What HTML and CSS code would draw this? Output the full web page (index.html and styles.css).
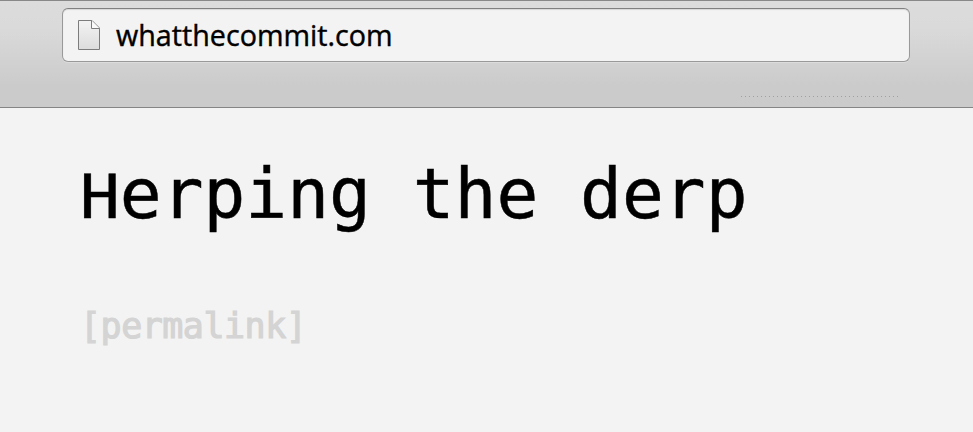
FILE: index.html
```html
<!DOCTYPE html>
<html lang="en">
<head>
<meta charset="utf-8">
<title>whatthecommit.com</title>
<link rel="stylesheet" href="styles.css">
</head>
<body>
<header class="toolbar">
  <div class="address">
    <svg class="page-icon" width="24" height="32" viewBox="0 0 24 32">
      <defs>
        <linearGradient id="paper" x2="0" y2="1">
          <stop offset="0" stop-color="#f3f3f3"/>
          <stop offset="1" stop-color="#dcdcdc"/>
        </linearGradient>
      </defs>
      <path d="M.5 1.5H14L21.5 9V30.5H.5Z" fill="url(#paper)" stroke="#7c7c7c"/>
      <path d="M13.5 1.5V9.5H21.5" fill="#fafafa" stroke="#7c7c7c"/>
    </svg>
    <span class="url">whatthecommit.com</span>
  </div>
  <div class="dots"></div>
</header>
<main class="content">
  <p class="message"><span class="cap">H</span>erping the derp</p>
  <a class="permalink">[permalink]</a>
</main>
</body>
</html>
```
FILE: styles.css
```css
* { box-sizing: border-box; }
body { margin: 0; height: 432px; overflow: hidden; background: #f3f3f3; }
.toolbar {
  height: 108px;
  padding: 7px 63px 0 62px;
  border-top: 1px solid #888;
  border-bottom: 1px solid #858585;
  background: linear-gradient(#dcdcdc, #dadada 25%, #cbcbcb 80%);
}
.address {
  display: flex;
  align-items: center;
  height: 54px;
  padding: 0 0 1px 15px;
  border: 1px solid #999;
  border-top-color: #808080;
  border-radius: 6px;
  background: #f3f3f3;
  box-shadow: inset 0 1px 1px #d8d8d8, 0 1px 0 #dcdcdc;
}
.page-icon { margin-right: 14px; }
.url {
  font: 28.7px/40px "Open Sans", sans-serif;
  color: #000;
  -webkit-text-stroke: 0.4px #000;
}
.dots {
  width: 159px;
  height: 1px;
  margin: 34px 11px 0 auto;
  background: repeating-linear-gradient(90deg, transparent 0 1px, #a0a0a0 1px 2px, transparent 2px 4px);
}
.content { padding: 46px 78px; }
.message {
  margin: 0;
  font: 69.5px/80px "DejaVu Sans Mono", monospace;
  color: #000;
  white-space: nowrap;
  -webkit-text-stroke: 0.5px #000;
}
.cap {
  display: inline-block;
  transform: translate(1px, 0) scale(0.96, 0.865);
  transform-origin: 50% 65px;
}
.permalink {
  display: block;
  margin: 72px 0 0 2px;
  font: 35px/40px "DejaVu Sans Mono", monospace;
  letter-spacing: -0.5px;
  color: #d4d4d4;
  -webkit-text-stroke: 1.2px #d4d4d4;
}
```
